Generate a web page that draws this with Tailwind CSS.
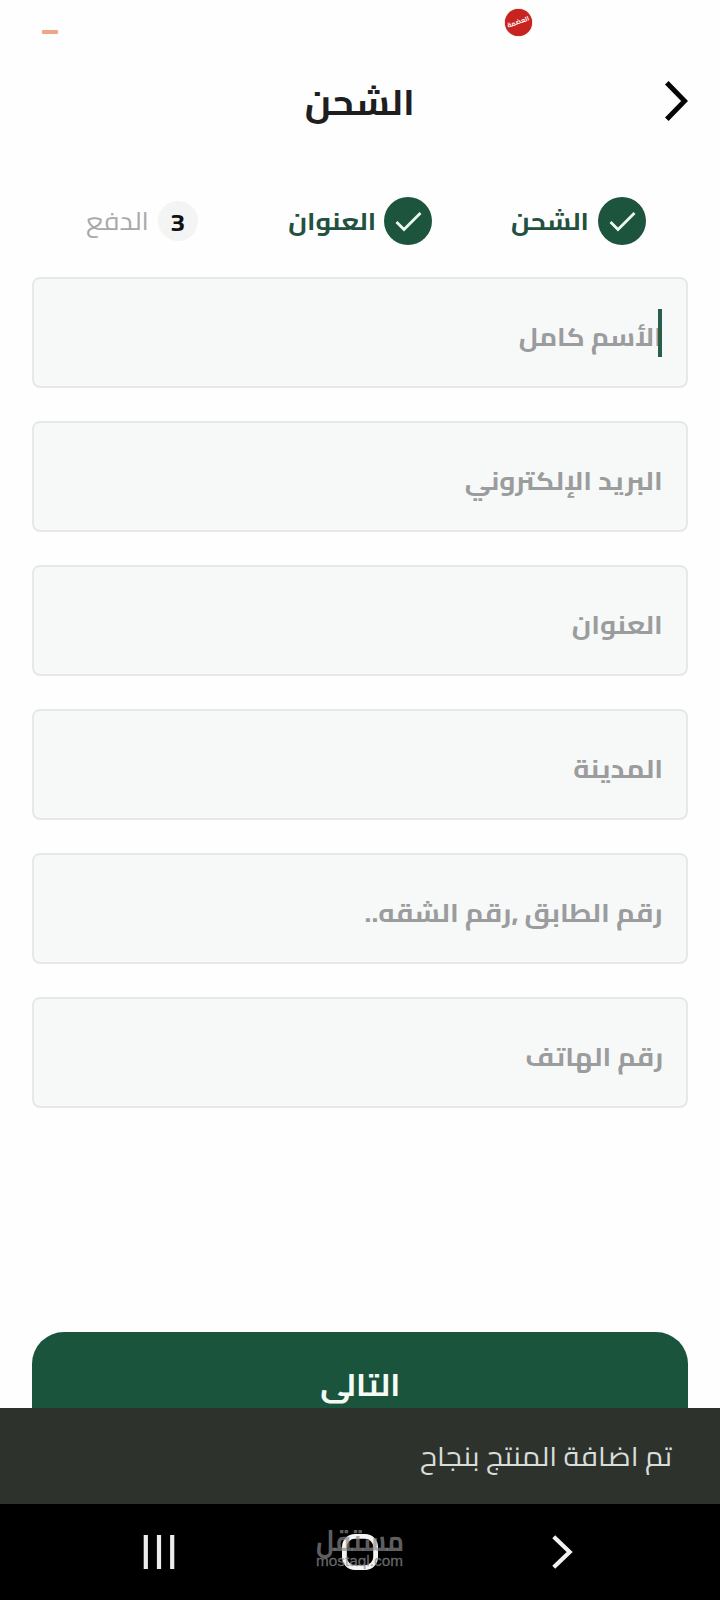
<!DOCTYPE html>
<html lang="ar" dir="rtl">
<head>
<meta charset="utf-8">
<meta name="viewport" content="width=device-width, initial-scale=1">
<title>الشحن</title>
<script src="https://cdn.jsdelivr.net/npm/@tailwindcss/browser@4"></script>
</head>
<body class="bg-[#fefefe] font-['Cairo','Noto_Sans_Arabic','DejaVu_Sans',sans-serif]">
<div class="flex h-[1600px] w-[720px] flex-col overflow-hidden">

  <!-- Status bar -->
  <div class="flex h-[46px] shrink-0 items-start justify-between pt-[9px] pr-[188px] pl-[42px]">
    <div class="flex size-[27px] items-center justify-center rounded-full bg-[#c9231f] shadow-[0_0_1px_#7a1a18]">
      <span class="-rotate-[20deg] text-[6.5px] leading-none font-bold text-white">العضمة</span>
    </div>
    <div class="mt-[21px] h-1 w-4 rounded-[1px] bg-[#f0a684]"></div>
  </div>

  <!-- App bar -->
  <header class="flex h-[110px] shrink-0 items-start px-8 pt-[35px]">
    <svg class="h-10 w-[23px]" viewBox="0 0 23 40" fill="none" stroke="#050505" stroke-width="5"><path d="M1.8 1.8 19.6 20 1.8 38.2"/></svg>
    <h1 class="mr-[250px] flex h-[48px] w-[110px] text-[35px] leading-[42px] font-bold text-[#1e1e1e]"><span data-w="110" class="inline-block origin-right whitespace-nowrap">الشحن</span></h1>
  </header>

  <!-- Steps -->
  <div class="flex h-[121px] shrink-0 items-start pt-[41px] pr-[74px]">
    <div class="flex h-12 w-[214px] items-center gap-[9px]">
      <svg class="size-12 shrink-0" viewBox="0 0 48 48" fill="none"><circle cx="24" cy="24" r="24" fill="#1c543d"/><path d="M12.5 25 20 32.5 36.5 16" stroke="#eef8f3" stroke-width="2.8"/></svg>
      <span data-w="78" class="inline-block origin-right text-[24.5px] leading-[48px] font-bold whitespace-nowrap text-[#23513f]">الشحن</span>
    </div>
    <div class="flex h-12 w-[234.5px] items-center gap-[8px]">
      <svg class="size-12 shrink-0" viewBox="0 0 48 48" fill="none"><circle cx="24" cy="24" r="24" fill="#1c543d"/><path d="M12.5 25 20 32.5 36.5 16" stroke="#eef8f3" stroke-width="2.8"/></svg>
      <span data-w="88" class="inline-block origin-right text-[24.5px] leading-[48px] font-bold whitespace-nowrap text-[#23513f]">العنوان</span>
    </div>
    <div class="flex h-12 items-center gap-[9px]">
      <div class="flex size-10 shrink-0 items-center justify-center rounded-full bg-[#f3f4f4] pt-[3px] text-[24px] leading-10 font-bold text-[#101312]"><span data-w="15" class="inline-block origin-center">3</span></div>
      <span data-w="63" class="inline-block origin-right text-[25px] leading-[48px] whitespace-nowrap text-[#a8a8a8]">الدفع</span>
    </div>
  </div>

  <!-- Form -->
  <main class="flex h-[1055px] shrink-0 flex-col gap-[33px] px-8 text-[25px] leading-[48px] font-bold text-[#9b9c9d]">
    <div class="relative flex h-[111px] shrink-0 items-start rounded-lg border-2 border-[#e7e8e8] bg-[#f7f9f8] pt-[34px] pr-[23px]">
      <span data-w="144" class="inline-block origin-right whitespace-nowrap">الأسم كامل</span>
      <div class="absolute top-[30px] right-[24px] h-12 w-1 bg-[#2c5f4b]"></div>
    </div>
    <div class="flex h-[111px] shrink-0 items-start rounded-lg border-2 border-[#e7e8e8] bg-[#f7f9f8] pt-[34px] pr-[23px]">
      <span data-w="198" class="inline-block origin-right whitespace-nowrap">البريد الإلكتروني</span>
    </div>
    <div class="flex h-[111px] shrink-0 items-start rounded-lg border-2 border-[#e7e8e8] bg-[#f7f9f8] pt-[34px] pr-[23px]">
      <span data-w="91" class="inline-block origin-right whitespace-nowrap">العنوان</span>
    </div>
    <div class="flex h-[111px] shrink-0 items-start rounded-lg border-2 border-[#e7e8e8] bg-[#f7f9f8] pt-[34px] pr-[23px]">
      <span data-w="90" class="inline-block origin-right whitespace-nowrap">المدينة</span>
    </div>
    <div class="flex h-[111px] shrink-0 items-start rounded-lg border-2 border-[#e7e8e8] bg-[#f7f9f8] pt-[34px] pr-[23px]">
      <span data-w="298" class="inline-block origin-right whitespace-nowrap">رقم الطابق ,رقم الشقه..</span>
    </div>
    <div class="flex h-[111px] shrink-0 items-start rounded-lg border-2 border-[#e7e8e8] bg-[#f7f9f8] pt-[34px] pr-[23px]">
      <span data-w="138" class="inline-block origin-right whitespace-nowrap">رقم الهاتف</span>
    </div>
  </main>

  <!-- Next button, its lower part under the snackbar -->
  <div class="h-[76px] shrink-0 px-8">
    <div class="flex h-[76px] items-start rounded-t-[32px] bg-[#1b543c] pt-[29px] pr-[288px] text-[31px] leading-[48px] font-bold text-[#f4fbf7]">
      <span data-w="80" class="inline-block origin-right whitespace-nowrap">التالى</span>
    </div>
  </div>

  <!-- Snackbar -->
  <div class="flex h-24 shrink-0 items-start bg-[#2d322d] pt-[24px] pr-[48px] text-[27px] leading-[48px] text-[#d9ddd9]">
    <span data-w="252" class="inline-block origin-right whitespace-nowrap">تم اضافة المنتج بنجاح</span>
  </div>

  <!-- System navigation -->
  <nav class="relative flex h-24 shrink-0 items-start bg-black pt-[30px] pr-[147px]">
    <svg class="mt-px h-[34px] w-[21px]" viewBox="0 0 22 35" fill="none" stroke="#f2f2f2" stroke-width="4.4"><path d="M1.8 1.5 18.5 17.5 1.8 33.5"/></svg>
    <svg class="mr-[174px] size-9" viewBox="0 0 36 36" fill="none" stroke="#f4f4f4" stroke-width="4.8"><rect x="2.4" y="2.4" width="31.2" height="31.2" rx="10.5"/></svg>
    <svg class="mt-px mr-[167px] h-[34px] w-8" viewBox="0 0 32 34" fill="none" stroke="#ededed" stroke-width="4.2"><path d="M2.8 0v34M16 0v34M29.2 0v34"/></svg>
    <div class="absolute top-[24px] left-[316px] flex w-[88px] flex-col items-start text-[#8a8a8a]/70" dir="ltr">
      <span data-w="88" class="inline-block origin-left text-[29px] leading-[25px] font-bold whitespace-nowrap" dir="rtl">مستقل</span>
      <span data-w="87" class="inline-block origin-left font-['Liberation_Sans',sans-serif] text-[14.5px] leading-4 font-medium whitespace-nowrap [-webkit-text-stroke:0.3px]">mostaql.com</span>
    </div>
  </nav>
</div>
<script>
  // Stretch each label horizontally to its designed width.
  window.addEventListener('load', () => {
    for (const el of document.querySelectorAll('[data-w]')) {
      el.style.transform = `scaleX(${el.dataset.w / el.getBoundingClientRect().width})`;
    }
  });
</script>
</body>
</html>
